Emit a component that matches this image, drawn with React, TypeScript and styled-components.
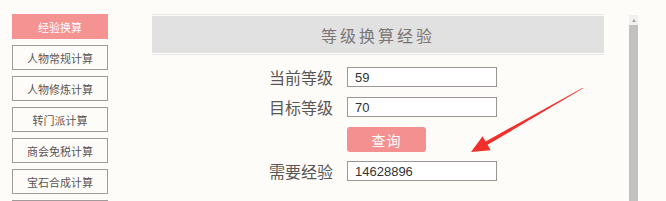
import React from 'react';
import styled, {createGlobalStyle} from 'styled-components';

const GlobalStyle = createGlobalStyle`
  html, body {
    margin: 0;
    padding: 0;
    background: #fefcf9;
  }
  body {
    font-family: "Noto Sans CJK SC", "Liberation Sans", sans-serif;
    overflow: hidden;
  }
`;

const PageStyles = styled.div`
  display: flex;
  align-items: flex-start;
  width: 666px;
  height: 201px;
  padding: 14px 0 0 12px;
  box-sizing: border-box;
  overflow: hidden;
`;

const SideNav = styled.ul`
  display: flex;
  flex-direction: column;
  gap: 6px;
  width: 96px;
  margin: 0 44px 0 0;
  padding: 0;
  list-style: none;
  flex-shrink: 0;
`;

const NavItem = styled.li<{$active?: boolean}>`
  height: 25px;
  box-sizing: border-box;
  display: flex;
  align-items: center;
  justify-content: center;
  font-size: 11px;
  color: ${(p) => (p.$active ? '#fff' : '#5a5555')};
  background: ${(p) => (p.$active ? '#f59292' : 'transparent')};
  border: 1px solid ${(p) => (p.$active ? '#f59292' : '#a39b9b')};
  cursor: pointer;
`;

const Panel = styled.section`
  position: relative;
  width: 452px;
  flex-shrink: 0;
`;

const TitleFrame = styled.div`
  border-top: 1px solid #e6e6e6;
  border-bottom: 1px solid #e6e6e6;
  padding: 1px 0;
`;

const Title = styled.h2`
  margin: 0;
  height: 37px;
  background: #e1e1e1;
  display: flex;
  align-items: center;
  justify-content: center;
  font-size: 16px;
  font-weight: normal;
  letter-spacing: 3px;
  color: #7a7676;
`;

const Form = styled.div`
  display: flex;
  flex-direction: column;
  padding: 12px 0 0 117px;
`;

const Row = styled.div<{$height?: number; $gap?: number}>`
  display: flex;
  align-items: center;
  gap: 14px;
  height: ${(p) => p.$height ?? 20}px;
  margin-bottom: ${(p) => p.$gap ?? 10}px;
`;

const Label = styled.span`
  width: 64px;
  font-size: 16px;
  line-height: 20px;
  color: #5a5656;
  text-align: right;
  white-space: nowrap;
`;

const Field = styled.input`
  width: 150px;
  height: 20px;
  box-sizing: border-box;
  border: 1px solid #9c9595;
  background: #fff;
  padding: 0 7px;
  font-family: "Liberation Sans", Arial, sans-serif;
  font-size: 13px;
  color: #333;
  outline: none;
`;

const QueryButton = styled.button`
  margin-left: 78px;
  width: 79px;
  height: 25px;
  border: none;
  border-radius: 3px;
  background: #f59090;
  color: #fff;
  font-family: "Noto Sans CJK SC", sans-serif;
  font-size: 14px;
  letter-spacing: 1px;
  cursor: pointer;
`;

const ArrowStyles = styled.svg`
  position: absolute;
  left: 316px;
  top: 71px;
`;

const ScrollTrack = styled.div`
  display: flex;
  flex-direction: column;
  width: 9px;
  margin: 1px 0 0 25px;
  height: 186px;
  flex-shrink: 0;
`;

const ScrollArrow = styled.div`
  height: 10px;
  background: #f1f1f1;
  display: flex;
  align-items: center;
  justify-content: center;

  &::after {
    content: '';
    border-left: 2px solid transparent;
    border-right: 2px solid transparent;
    border-bottom: 3px solid #a3a3a3;
  }
`;

const ScrollThumb = styled.div`
  flex: 1;
  background: #c1c1c1;
`;

// the last item is cut off by the frame, only its top border shows
const navItems = ['经验换算', '人物常规计算', '人物修炼计算', '转门派计算', '商会免税计算', '宝石合成计算', ''];

export default function App() {
  return (
    <>
      <GlobalStyle />
      <PageStyles>
        <SideNav>
          {navItems.map((name, i) => (
            <NavItem key={i} $active={i === 0}>{name}</NavItem>
          ))}
        </SideNav>
        <Panel>
          <TitleFrame>
            <Title>等级换算经验</Title>
          </TitleFrame>
          <Form>
            <Row>
              <Label>当前等级</Label>
              <Field defaultValue="59" />
            </Row>
            <Row>
              <Label>目标等级</Label>
              <Field defaultValue="70" />
            </Row>
            <Row $height={25} $gap={9}>
              <QueryButton>查询</QueryButton>
            </Row>
            <Row>
              <Label>需要经验</Label>
              <Field defaultValue="14628896" />
            </Row>
          </Form>
          <ArrowStyles width="120" height="90" viewBox="468 85 120 90">
            <polygon
              points="583.2,88.3 487.6,144.8 490.6,150.2 471,152 482.6,136.2 485.6,141.4 582.8,87.7"
              fill="#f2302b"
            />
          </ArrowStyles>
        </Panel>
        <ScrollTrack>
          <ScrollArrow />
          <ScrollThumb />
        </ScrollTrack>
      </PageStyles>
    </>
  );
}
